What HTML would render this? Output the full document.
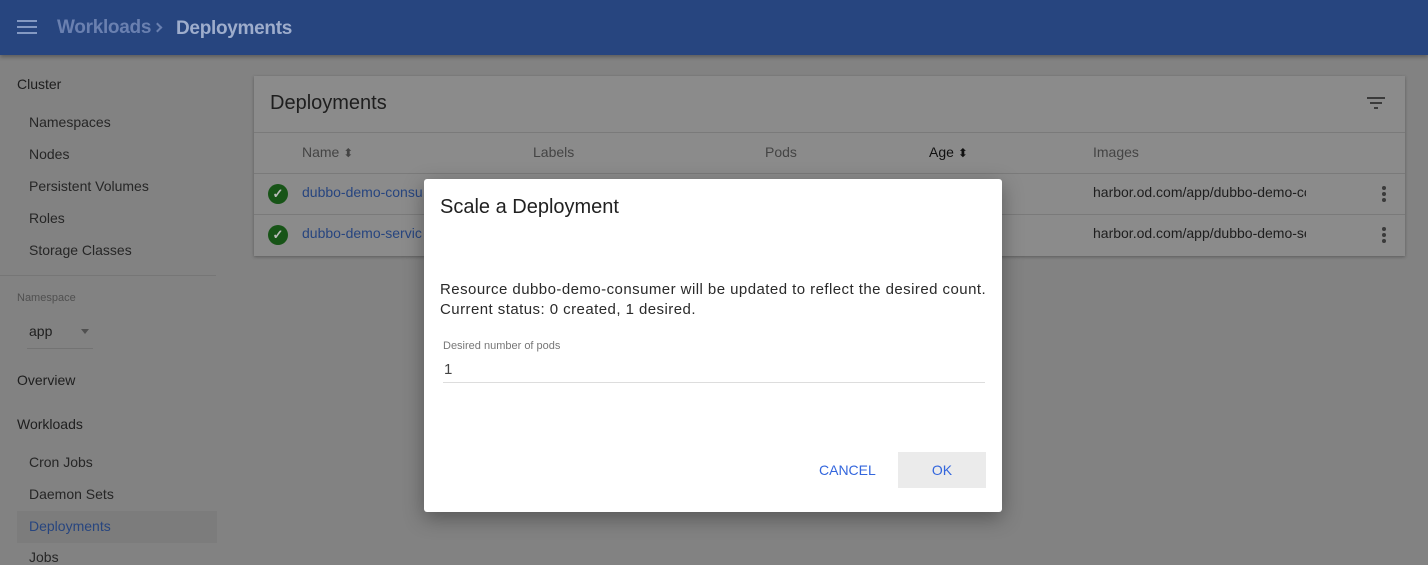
<!DOCTYPE html>
<html><head><meta charset="utf-8"><style>
*{box-sizing:border-box;margin:0;padding:0}
body{width:1428px;height:563px;overflow:hidden;background:#828282;font-family:"Liberation Sans",Roboto,sans-serif;position:relative;color:#1a1a1a}
.hdr{position:absolute;left:0;top:0;width:1428px;height:55px;background:#27457f;box-shadow:0 2px 4px rgba(0,0,0,.3)}
.hdr .t{position:absolute;top:17px;font-size:19px;font-weight:bold}
.s{position:absolute;font-size:14px;color:#1e1e1e}
.sec{left:17px}
.it{left:29px;color:#262626}
.card{position:absolute;left:254px;top:76px;width:1151px;height:180px;background:#8b8b8b;box-shadow:0 1px 3px rgba(0,0,0,.3)}
.line{position:absolute;left:0;width:100%;height:1px;background:#7a7a7a}
.c{position:absolute;font-size:14px}
.dlg{position:absolute;left:424px;top:179px;width:578px;height:333px;background:#fff;border-radius:3px;box-shadow:0 6px 20px rgba(0,0,0,.35)}
.dots i{display:block;width:4px;height:4px;border-radius:50%;background:#3a3a3a;margin-bottom:2px}
</style></head><body>
<div class="hdr">
<div style="position:absolute;left:17px;top:20px;width:20px;height:2px;background:#8499c2;box-shadow:0 6px 0 #8499c2,0 12px 0 #8499c2"></div>
<div class="t" style="left:57px;top:17px;color:#6a80b0;letter-spacing:-0.3px">Workloads</div>
<div style="position:absolute;left:154px;top:24px;width:7px;height:7px;border-top:2px solid #6a80b0;border-right:2px solid #6a80b0;transform:rotate(45deg)"></div>
<div class="t" style="left:176px;top:18px;color:#9eadcc;letter-spacing:-0.3px">Deployments</div>
</div>
<div class="s sec" style="top:76px">Cluster</div>
<div class="s it" style="top:114px">Namespaces</div>
<div class="s it" style="top:146px">Nodes</div>
<div class="s it" style="top:178px">Persistent Volumes</div>
<div class="s it" style="top:210px">Roles</div>
<div class="s it" style="top:242px">Storage Classes</div>
<div style="position:absolute;left:0;top:275px;width:216px;height:1px;background:#767676"></div>
<div class="s" style="left:17px;top:292px;font-size:11px;color:#505050">Namespace</div>
<div class="s" style="left:29px;top:323px;font-weight:500">app</div>
<div style="position:absolute;left:81px;top:329px;border:4px solid transparent;border-top:5px solid #505050"></div>
<div style="position:absolute;left:27px;top:348px;width:66px;height:1px;background:#737373"></div>
<div class="s sec" style="top:372px">Overview</div>
<div class="s sec" style="top:416px">Workloads</div>
<div class="s it" style="top:454px">Cron Jobs</div>
<div class="s it" style="top:486px">Daemon Sets</div>
<div style="position:absolute;left:17px;top:511px;width:200px;height:32px;background:#7c7c7c"></div>
<div class="s it" style="top:518px;color:#27457f">Deployments</div>
<div class="s it" style="top:549px">Jobs</div>

<div class="card">
<div class="c" style="left:16px;top:16px;font-size:20px;color:#1e1e1e">Deployments</div>
<div style="position:absolute;left:1113px;top:21px;width:18px;height:2px;background:#3a3a3a"></div>
<div style="position:absolute;left:1116px;top:26px;width:12px;height:2px;background:#3a3a3a"></div>
<div style="position:absolute;left:1120px;top:31px;width:4px;height:2px;background:#3a3a3a"></div>
<div class="line" style="top:56px"></div>
<div class="c" style="left:48px;top:68px;color:#444">Name <span style="font-size:12px">&#x2B0D;</span></div>
<div class="c" style="left:279px;top:68px;color:#444">Labels</div>
<div class="c" style="left:511px;top:68px;color:#444">Pods</div>
<div class="c" style="left:675px;top:68px;color:#111">Age <span style="font-size:12px">&#x2B0D;</span></div>
<div class="c" style="left:839px;top:68px;color:#444">Images</div>
<div class="line" style="top:97px"></div>
<div class="line" style="top:138px"></div>
<div style="position:absolute;left:14px;top:108px;width:20px;height:20px;border-radius:50%;background:#175417;color:#bbb;font-size:13px;text-align:center;line-height:20px;font-weight:bold">✓</div>
<div style="position:absolute;left:14px;top:149px;width:20px;height:20px;border-radius:50%;background:#175417;color:#bbb;font-size:13px;text-align:center;line-height:20px;font-weight:bold">✓</div>
<div class="c" style="left:48px;top:108px;color:#27457f">dubbo-demo-consu</div>
<div class="c" style="left:48px;top:149px;color:#27457f">dubbo-demo-servic</div>
<div class="c" style="left:839px;top:108px;color:#1e1e1e;width:213px;overflow:hidden;white-space:nowrap">harbor.od.com/app/dubbo-demo-consumer</div>
<div class="c" style="left:839px;top:149px;color:#1e1e1e;width:213px;overflow:hidden;white-space:nowrap">harbor.od.com/app/dubbo-demo-service</div>
<div class="dots" style="position:absolute;left:1128px;top:110px"><i></i><i></i><i></i></div>
<div class="dots" style="position:absolute;left:1128px;top:151px"><i></i><i></i><i></i></div>
</div>

<div class="dlg">
<div style="position:absolute;left:16px;top:17px;font-size:20px;color:#212121">Scale a Deployment</div>
<div style="position:absolute;left:16px;top:101px;font-size:15px;line-height:20px;color:#2a2a2a;letter-spacing:0.45px;white-space:nowrap">Resource dubbo-demo-consumer will be updated to reflect the desired count.<br>Current status: 0 created, 1 desired.</div>
<div style="position:absolute;left:19px;top:161px;font-size:11px;color:#777">Desired number of pods</div>
<div style="position:absolute;left:20px;top:182px;font-size:15px;color:#444">1</div>
<div style="position:absolute;left:19px;top:203px;width:542px;height:1px;background:#ddd"></div>
<div style="position:absolute;left:395px;top:283px;font-size:14px;color:#3366dd">CANCEL</div>
<div style="position:absolute;left:474px;top:273px;width:88px;height:36px;background:#ebebeb;color:#3366dd;font-size:14px;text-align:center;line-height:36px">OK</div>
</div>
</body></html>
